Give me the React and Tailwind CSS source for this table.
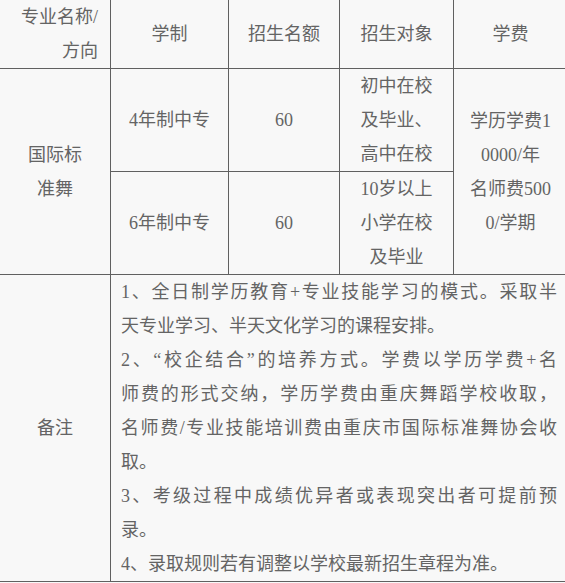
import React from 'react';

const cell = 'border-r border-b border-[#606060] flex flex-col items-center justify-center text-center';

const notes = [
  { text: '1、全日制学历教育+专业技能学习的模式。采取半', full: true },
  { text: '天专业学习、半天文化学习的课程安排。' },
  { text: '2、“校企结合”的培养方式。学费以学历学费+名', full: true },
  { text: '师费的形式交纳，学历学费由重庆舞蹈学校收取，', full: true },
  { text: '名师费/专业技能培训费由重庆市国际标准舞协会收', full: true },
  { text: '取。' },
  { text: '3、考级过程中成绩优异者或表现突出者可提前预', full: true },
  { text: '录。' },
  { text: '4、录取规则若有调整以学校最新招生章程为准。' },
];

export default function App() {
  return (
    <div className="w-[565px] h-[583px] overflow-hidden bg-[#f8f8f8] text-[#646464] text-[18px] leading-[34px] font-['Liberation_Serif','Noto_Sans_CJK_SC',serif]">
      <div className="grid w-[568px] grid-cols-[111px_118px_111px_114px_114px] grid-rows-[69px_103px_103px_307px]">
        {/* Header */}
        <div className="border-r border-b border-[#606060] flex flex-col items-end justify-center text-right pr-[12px]">
          <div>专业名称/</div>
          <div>方向</div>
        </div>
        <div className={cell}>学制</div>
        <div className={cell}>招生名额</div>
        <div className={cell}>招生对象</div>
        <div className={cell}>学费</div>

        {/* Rows */}
        <div className={`${cell} row-span-2`}>
          <div>国际标</div>
          <div>准舞</div>
        </div>
        <div className={cell}>4年制中专</div>
        <div className={cell}>60</div>
        <div className={cell}>
          <div>初中在校</div>
          <div>及毕业、</div>
          <div>高中在校</div>
        </div>
        <div className={`${cell} row-span-2`}>
          <div>学历学费1</div>
          <div>0000/年</div>
          <div>名师费500</div>
          <div>0/学期</div>
        </div>
        <div className={cell}>6年制中专</div>
        <div className={cell}>60</div>
        <div className={cell}>
          <div>10岁以上</div>
          <div>小学在校</div>
          <div>及毕业</div>
        </div>

        {/* Notes */}
        <div className={cell}>备注</div>
        <div className="col-span-4 border-r border-b border-[#606060] flex flex-col justify-center px-[10px]">
          {notes.map((line, i) => (
            <div
              key={i}
              className={line.full ? 'whitespace-nowrap text-justify [text-align-last:justify]' : 'whitespace-nowrap text-left'}
            >
              {line.text}
            </div>
          ))}
        </div>
      </div>
    </div>
  );
}
